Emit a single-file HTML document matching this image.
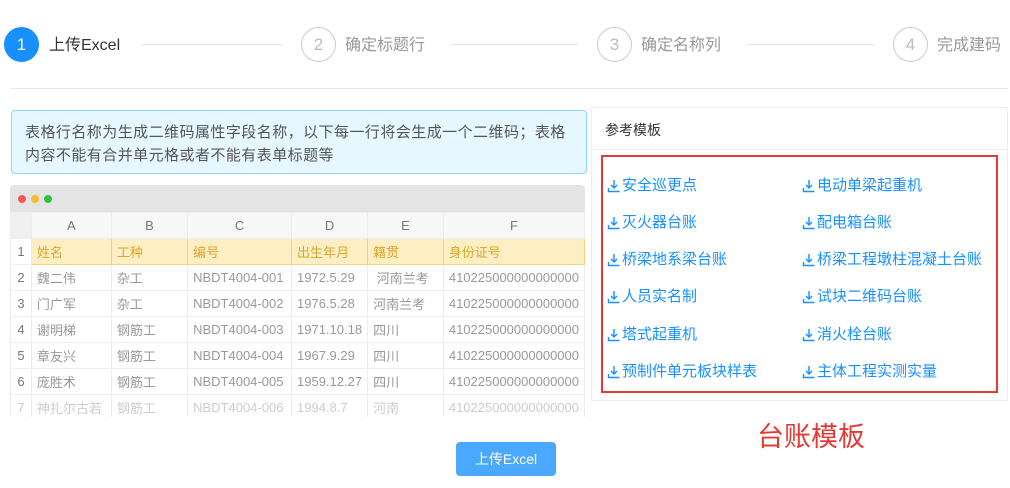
<!DOCTYPE html>
<html><head><meta charset="utf-8"><style>
body{margin:0;width:1010px;height:488px;background:#fff;font-family:"Liberation Sans","Noto Sans CJK SC",sans-serif;position:relative;overflow:hidden}
.a{position:absolute}
.circ{position:absolute;width:33px;height:33px;border-radius:50%;border:1px solid #ccc;color:#bbb;font-size:17px;text-align:center;line-height:33px;top:27px}
.st{position:absolute;top:35px;font-size:16px;color:#999;line-height:22px}
.ln{position:absolute;top:44px;height:1px;background:#e6e6e6}
.tb{position:absolute;left:10px;top:185px;width:575px;height:232px;overflow:hidden;background:#fff}
.tb table{border-collapse:collapse;font-size:13px;color:#999;position:absolute;top:27px;left:0}
.tb td{height:25px;border:1px solid #eee;padding:0 5px;white-space:nowrap;overflow:hidden}
.lk{position:absolute;font-size:15px;color:#1890ff;line-height:18px;display:flex;align-items:center}
.lk svg{margin-right:1px}
</style></head><body>
<svg width="0" height="0" style="position:absolute"><defs><symbol id="dl" viewBox="0 0 14 14"><path d="M7 1v8M4 6l3 3 3-3M1.5 9v3.5h11" fill="none" stroke="#1890ff" stroke-width="1.4"/></symbol></defs></svg>
<div class="circ" style="left:4px;background:#1890ff;border-color:#1890ff;color:#fff">1</div>
<div class="st" style="left:49px;color:#333">上传Excel</div>
<div class="ln" style="left:141px;width:142px"></div>
<div class="circ" style="left:301px">2</div>
<div class="st" style="left:345px">确定标题行</div>
<div class="ln" style="left:450px;width:128px"></div>
<div class="circ" style="left:597px">3</div>
<div class="st" style="left:641px">确定名称列</div>
<div class="ln" style="left:746px;width:129px"></div>
<div class="circ" style="left:893px">4</div>
<div class="st" style="left:937px">完成建码</div>
<div class="a" style="left:10px;top:88px;width:998px;height:1px;background:#e8e8e8"></div>

<div class="a" style="left:11px;top:110px;width:548px;height:42px;padding:10px 13px;background:#e6f7ff;border:1px solid #91d5ff;border-radius:4px;font-size:15px;color:#555;line-height:23px;white-space:nowrap;letter-spacing:0.45px">表格行名称为生成二维码属性字段名称，以下每一行将会生成一个二维码；表格<br>内容不能有合并单元格或者不能有表单标题等</div>

<div class="tb">
<div class="a" style="left:0;top:0;width:575px;height:27px;background:#e4e4e4;border-radius:4px 4px 0 0"></div>
<div class="a" style="left:8px;top:10px;width:8px;height:8px;border-radius:50%;background:#f45b55"></div>
<div class="a" style="left:21px;top:10px;width:8px;height:8px;border-radius:50%;background:#f8bd2f"></div>
<div class="a" style="left:34px;top:10px;width:8px;height:8px;border-radius:50%;background:#2cc541"></div>
<table>
<colgroup><col style="width:21px"><col style="width:80px"><col style="width:77px"><col style="width:104px"><col style="width:76px"><col style="width:76px"><col style="width:141px"></colgroup>
<tr style="background:#f7f7f7;color:#777;text-align:center"><td style="background:#f0f0f0"></td><td>A</td><td>B</td><td>C</td><td>D</td><td>E</td><td>F</td></tr>
<tr style="background:#fdefc3;color:#d9a62e"><td style="background:#fff;color:#777;text-align:center">1</td><td style="border:1px solid #f5d27a">姓名</td><td style="border:1px solid #f5d27a">工种</td><td style="border:1px solid #f5d27a">编号</td><td style="border:1px solid #f5d27a">出生年月</td><td style="border:1px solid #f5d27a">籍贯</td><td style="border:1px solid #f5d27a">身份证号</td></tr>
<tr><td style="color:#777;text-align:center">2</td><td>魏二伟</td><td>杂工</td><td>NBDT4004-001</td><td>1972.5.29</td><td>&nbsp;河南兰考</td><td>410225000000000000</td></tr>
<tr><td style="color:#777;text-align:center">3</td><td>门广军</td><td>杂工</td><td>NBDT4004-002</td><td>1976.5.28</td><td>河南兰考</td><td>410225000000000000</td></tr>
<tr><td style="color:#777;text-align:center">4</td><td>谢明梯</td><td>钢筋工</td><td>NBDT4004-003</td><td>1971.10.18</td><td>四川</td><td>410225000000000000</td></tr>
<tr><td style="color:#777;text-align:center">5</td><td>章友兴</td><td>钢筋工</td><td>NBDT4004-004</td><td>1967.9.29</td><td>四川</td><td>410225000000000000</td></tr>
<tr><td style="color:#777;text-align:center">6</td><td>庞胜术</td><td>钢筋工</td><td>NBDT4004-005</td><td>1959.12.27</td><td>四川</td><td>410225000000000000</td></tr>
<tr style="color:#ccc"><td style="text-align:center">7</td><td>神扎尔古若</td><td>钢筋工</td><td>NBDT4004-006</td><td>1994.8.7</td><td>河南</td><td>410225000000000000</td></tr>
</table>
</div>

<div class="a" style="left:591px;top:107px;width:415px;height:292px;border:1px solid #eee"></div>
<div class="a" style="left:605px;top:120px;font-size:14px;color:#333">参考模板</div>
<div class="a" style="left:592px;top:149px;width:415px;height:1px;background:#eee"></div>
<div class="a" style="left:601px;top:155px;width:393px;height:234px;border:2px solid #e53935"></div>
<div class="lk" style="left:607px;top:177px"><svg width="14" height="14"><use href="#dl"/></svg>安全巡更点</div><div class="lk" style="left:802px;top:177px"><svg width="14" height="14"><use href="#dl"/></svg>电动单梁起重机</div>
<div class="lk" style="left:607px;top:214px"><svg width="14" height="14"><use href="#dl"/></svg>灭火器台账</div><div class="lk" style="left:802px;top:214px"><svg width="14" height="14"><use href="#dl"/></svg>配电箱台账</div>
<div class="lk" style="left:607px;top:251px"><svg width="14" height="14"><use href="#dl"/></svg>桥梁地系梁台账</div><div class="lk" style="left:802px;top:251px"><svg width="14" height="14"><use href="#dl"/></svg>桥梁工程墩柱混凝土台账</div>
<div class="lk" style="left:607px;top:288px"><svg width="14" height="14"><use href="#dl"/></svg>人员实名制</div><div class="lk" style="left:802px;top:288px"><svg width="14" height="14"><use href="#dl"/></svg>试块二维码台账</div>
<div class="lk" style="left:607px;top:326px"><svg width="14" height="14"><use href="#dl"/></svg>塔式起重机</div><div class="lk" style="left:802px;top:326px"><svg width="14" height="14"><use href="#dl"/></svg>消火栓台账</div>
<div class="lk" style="left:607px;top:363px"><svg width="14" height="14"><use href="#dl"/></svg>预制件单元板块样表</div><div class="lk" style="left:802px;top:363px"><svg width="14" height="14"><use href="#dl"/></svg>主体工程实测实量</div>
<div class="a" style="left:757px;top:419px;font-size:27px;color:#e53935;line-height:36px">台账模板</div>
<div class="a" style="left:456px;top:442px;width:100px;height:34px;background:#4aa8ff;border-radius:4px;color:#fff;font-size:14px;text-align:center;line-height:34px">上传Excel</div>
</body></html>
